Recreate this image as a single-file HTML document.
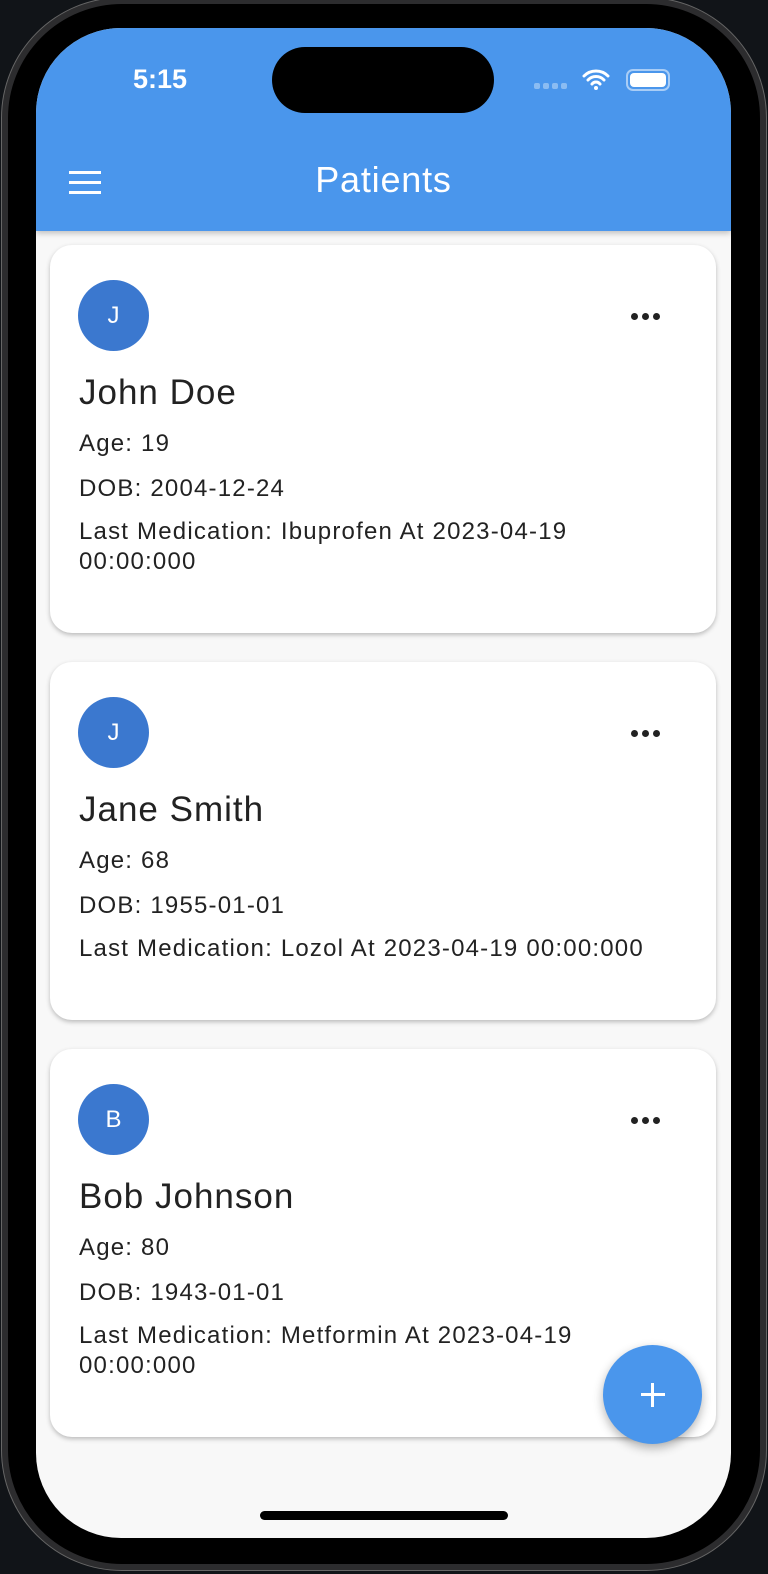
<!DOCTYPE html>
<html><head><meta charset="utf-8"><style>
*{margin:0;padding:0;box-sizing:border-box}
body{width:768px;height:1574px;background:#111418;position:relative;overflow:hidden;font-family:"Liberation Sans",sans-serif}
.frame{position:absolute;left:2px;top:-2px;width:764px;height:1572px;border-radius:120px;background:#000;border:6px solid #2c2c2e;box-shadow:0 0 0 1px #666}
.screen{position:absolute;left:36px;top:28px;width:695px;height:1510px;border-radius:85px;background:#f8f8f8;overflow:hidden}
.hdr{position:absolute;left:0;top:0;width:100%;height:203px;background:#4a96ec;box-shadow:0 2px 6px rgba(0,0,0,.25)}
.island{position:absolute;left:236px;top:19px;width:222px;height:66px;border-radius:33px;background:#000}
.time{position:absolute;left:97px;top:36px;color:#fff;font-size:27px;font-weight:bold}
.title{position:absolute;left:0;width:100%;top:131px;text-align:center;color:#fff;font-size:36px;letter-spacing:.8px}
.menu{position:absolute;left:33px;top:143px;width:32px}
.menu i{display:block;height:3px;background:#fff;margin-bottom:7px}
.card{position:absolute;left:14px;width:666px;background:#fff;border-radius:22px;box-shadow:0 2px 5px rgba(0,0,0,.25)}
.av{position:absolute;left:28px;top:35px;width:71px;height:71px;border-radius:50%;background:#3b78cf;color:#fff;font-size:24px;text-align:center;line-height:71px}
.dots{position:absolute;right:56px;top:68px;display:flex;gap:4px}
.dots i{width:7px;height:7px;border-radius:50%;background:#222}
.nm{position:absolute;left:29px;top:128px;font-size:35px;letter-spacing:1px;color:#222}
.ln{position:absolute;left:29px;font-size:24px;letter-spacing:1.2px;color:#222;line-height:30px}
.fab{position:absolute;left:567px;top:1317px;width:99px;height:99px;border-radius:50%;background:#4a96ec;box-shadow:0 4px 10px rgba(0,0,0,.3)}
.fab:before{content:"";position:absolute;left:38px;top:48px;width:24px;height:3px;background:#fff}
.fab:after{content:"";position:absolute;left:48px;top:38px;width:3px;height:24px;background:#fff}
.home{position:absolute;left:224px;top:1483px;width:248px;height:9px;border-radius:5px;background:#000}
</style></head><body>
<div class="frame"></div>
<div class="screen">
<div class="hdr">
<div class="island"></div>
<div class="time">5:15</div>
<div style="position:absolute;left:498px;top:55px;display:flex;gap:3px"><i style="width:6px;height:6px;border-radius:2px;background:#8bbcf2;display:block"></i><i style="width:6px;height:6px;border-radius:2px;background:#8bbcf2;display:block"></i><i style="width:6px;height:6px;border-radius:2px;background:#8bbcf2;display:block"></i><i style="width:6px;height:6px;border-radius:2px;background:#8bbcf2;display:block"></i></div>
<svg style="position:absolute;left:546px;top:40px" width="28" height="22" viewBox="0 0 28 22"><path d="M2 8a17 17 0 0 1 24 0M6 12a11 11 0 0 1 16 0M10 16a5 5 0 0 1 8 0" stroke="#fff" stroke-width="3" fill="none" stroke-linecap="round"/><circle cx="14" cy="20" r="2" fill="#fff"/></svg>
<div style="position:absolute;left:590px;top:41px;width:44px;height:22px;border-radius:7px;border:2px solid #a9cdf6;padding:2px"><div style="width:100%;height:100%;background:#fff;border-radius:4px"></div></div>
<div class="menu"><i></i><i></i><i></i></div>
<div class="title">Patients</div>
</div>

<div class="card" style="top:217px;height:388px">
<div class="av">J</div><div class="dots"><i></i><i></i><i></i></div>
<div class="nm">John Doe</div>
<div class="ln" style="top:184px">Age: 19</div>
<div class="ln" style="top:229px">DOB: 2004-12-24</div>
<div class="ln" style="top:272px">Last Medication: Ibuprofen At 2023-04-19<br>00:00:000</div>
</div>

<div class="card" style="top:634px;height:358px">
<div class="av">J</div><div class="dots"><i></i><i></i><i></i></div>
<div class="nm">Jane Smith</div>
<div class="ln" style="top:184px">Age: 68</div>
<div class="ln" style="top:229px">DOB: 1955-01-01</div>
<div class="ln" style="top:272px">Last Medication: Lozol At 2023-04-19 00:00:000</div>
</div>

<div class="card" style="top:1021px;height:388px">
<div class="av">B</div><div class="dots"><i></i><i></i><i></i></div>
<div class="nm">Bob Johnson</div>
<div class="ln" style="top:184px">Age: 80</div>
<div class="ln" style="top:229px">DOB: 1943-01-01</div>
<div class="ln" style="top:272px">Last Medication: Metformin At 2023-04-19<br>00:00:000</div>
</div>

<div class="fab"></div>
<div class="home"></div>
</div>
</body></html>
